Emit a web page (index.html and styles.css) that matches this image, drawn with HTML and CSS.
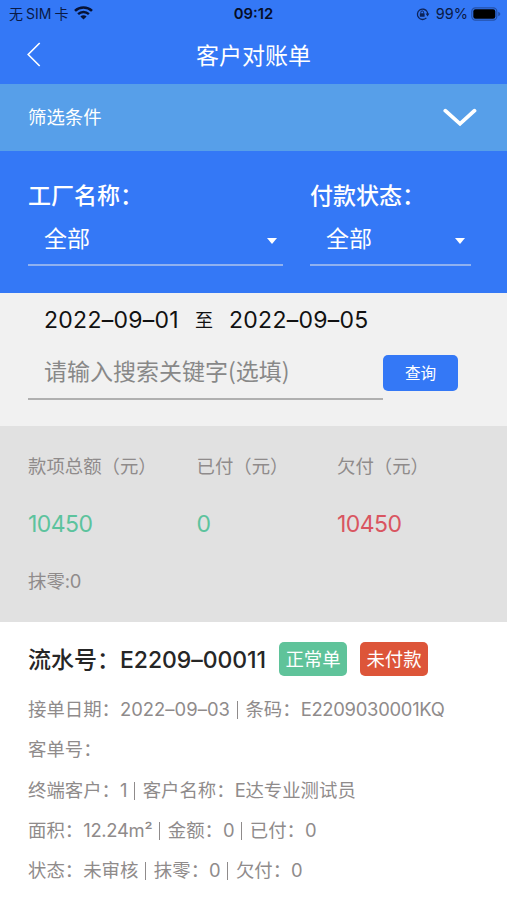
FILE: index.html
```html
<!DOCTYPE html>
<html lang="zh-CN">
<head>
  <meta charset="UTF-8">
  <title>客户对账单</title>
  <link rel="stylesheet" href="styles.css">
</head>
<body>

  <!-- Status bar -->
  <div class="status-bar">
    <div class="status-left">
      <span class="carrier">无<span class="sim">SIM</span>卡</span>
      <svg class="wifi" width="19" height="14" viewBox="0 0 19 14">
        <path d="M1 4.9 A12.4 12.4 0 0 1 18 4.9" fill="none" stroke="#071235" stroke-width="2.6"/>
        <path d="M4.1 8.2 A7.8 7.8 0 0 1 14.9 8.2" fill="none" stroke="#071235" stroke-width="2.4"/>
        <path d="M9.5 13.6 L6.4 10.5 A4.4 4.4 0 0 1 12.6 10.5 Z" fill="#071235"/>
      </svg>
    </div>
    <div class="clock">09:12</div>
    <div class="status-right">
      <svg class="lock" width="14" height="14" viewBox="0 0 14 14">
        <path d="M10.4 10.9 A5.2 5.2 0 1 1 11.2 4.8" fill="none" stroke="#0d2359" stroke-width="1.3"/>
        <path d="M11.2 4.8 Q11.9 6.3 11.5 8" fill="none" stroke="#0d2359" stroke-width="1.3"/>
        <path d="M9.6 6.6 L13.4 6.6 L11.5 9.4 Z" fill="#0d2359"/>
        <rect x="3.8" y="6.2" width="4.8" height="3.6" rx="0.6" fill="#0d2359"/>
        <path d="M4.8 6.5 V5.3 A1.4 1.4 0 0 1 7.6 5.3 V6.5" fill="none" stroke="#0d2359" stroke-width="1"/>
      </svg>
      <span class="battery-text">99%</span>
      <svg class="battery" width="30" height="14" viewBox="0 0 30 14">
        <rect x="0.8" y="0.8" width="25" height="12.4" rx="3.6" fill="none" stroke="#2450a8" stroke-width="1.2"/>
        <rect x="2.3" y="2.3" width="22" height="9.4" rx="2.2" fill="#000"/>
        <path d="M27.2 4.7 Q29.4 5.5 29.4 7 Q29.4 8.5 27.2 9.3 Z" fill="#2450a8"/>
      </svg>
    </div>
  </div>

  <div class="nav">
    <svg class="back" width="14" height="25" viewBox="0 0 14 25">
      <path d="M12.7 1 L1.2 12.5 L12.7 24" fill="none" stroke="#fff" stroke-width="1.6"/>
    </svg>
    <h1>客户对账单</h1>
  </div>

  <div class="filter-bar">
    <span>筛选条件</span>
    <svg width="34" height="20" viewBox="0 0 34 20">
      <path d="M2.3 2.7 L17 15.8 L31.5 2.7" fill="none" stroke="#fff" stroke-width="3.8" stroke-linecap="round" stroke-linejoin="miter"/>
    </svg>
  </div>

  <div class="selects">
    <div class="field factory">
      <label>工厂名称：</label>
      <div class="select">全部<i class="caret"></i></div>
    </div>
    <div class="field pay">
      <label>付款状态：</label>
      <div class="select">全部<i class="caret"></i></div>
    </div>
  </div>

  <div class="search">
    <div class="dates">
      <span class="num date">2022–09–01</span>
      <span class="to">至</span>
      <span class="num date">2022–09–05</span>
    </div>
    <div class="search-row">
      <div class="keyword">请输入搜索关键字(选填)</div>
      <button class="query">查询</button>
    </div>
  </div>

  <div class="summary">
    <div class="totals">
      <div class="total">
        <p>款项总额（元）</p>
        <b class="green">10450</b>
      </div>
      <div class="total">
        <p>已付（元）</p>
        <b class="green">0</b>
      </div>
      <div class="total">
        <p>欠付（元）</p>
        <b class="red">10450</b>
      </div>
    </div>
    <p class="round-off">抹零<span class="num">:0</span></p>
  </div>

  <div class="order">
    <div class="order-head">
      <h2>流水号：<span class="num serial">E2209–00011</span></h2>
      <span class="tag tag-green">正常单</span>
      <span class="tag tag-red">未付款</span>
    </div>
    <p>接单日期：<span class="num day">2022–09–03</span><i class="bar"></i>条码：<span class="num">E2209030001KQ</span></p>
    <p>客单号：</p>
    <p>终端客户：<span class="num">1</span><i class="bar"></i>客户名称：<span class="num">E</span>达专业测试员</p>
    <p>面积：<span class="num">12.24m²</span><i class="bar"></i>金额：<span class="num">0</span><i class="bar"></i>已付：<span class="num">0</span></p>
    <p>状态：未审核<i class="bar"></i>抹零：<span class="num">0</span><i class="bar"></i>欠付：<span class="num">0</span></p>
  </div>

</body>
</html>
```

FILE: styles.css
```css
* {
  box-sizing: border-box;
}
body {
  margin: 0;
  height: 900px;
  overflow: hidden;
  background: #fff;
  font-family: "Noto Sans CJK SC", sans-serif;
  font-size: 18.4px;
  color: #8f8b8b;
}
p, h1, h2 {
  margin: 0;
  font-weight: 400;
}
svg {
  display: block;
}
.num {
  font-family: Inter, "Noto Sans CJK SC", sans-serif;
  letter-spacing: -0.015em;
}

/* Status bar */
.status-bar {
  display: grid;
  grid-template-columns: 1fr auto 1fr;
  align-items: center;
  height: 28px;
  padding: 0 6px 0 9px;
  background: #3478f6;
  color: #0a1a45;
  font-family: Inter, "Noto Sans CJK SC", sans-serif;
  font-size: 14px;
  line-height: 28px;
}
.status-left, .status-right {
  display: flex;
  align-items: center;
}
.status-right {
  justify-content: flex-end;
}
.sim {
  margin: 0 3px;
}
.wifi {
  margin: -2px 0 0 6px;
}
.clock {
  margin-right: 3px;
  color: #050d26;
  font-weight: 600;
  font-size: 14.8px;
}
.battery-text {
  margin: 0 3px 0 6px;
  font-size: 14.5px;
}
.battery {
  margin-top: -1px;
}

/* Title */
.nav {
  display: grid;
  grid-template-columns: 60px 1fr 60px;
  align-items: center;
  height: 56px;
  padding-bottom: 3px;
  background: #3478f6;
  color: #fff;
}
.back {
  margin-left: 27px;
}
.nav h1 {
  font-size: 23px;
  line-height: 48px;
  height: 50px;
  text-align: center;
}

.filter-bar {
  display: flex;
  justify-content: space-between;
  align-items: center;
  height: 67px;
  padding: 0 30px 0 28px;
  background: #579fe9;
  color: #fff;
}
.filter-bar span {
  height: 32px;
  line-height: 28px;
}

/* Selects */
.selects {
  display: flex;
  gap: 27px;
  height: 142px;
  padding: 28px 0 0 28px;
  background: #3478f6;
  color: #fff;
  font-size: 23px;
}
.factory {
  width: 255px;
}
.pay {
  width: 161px;
}
.field label {
  display: block;
  height: 32px;
  line-height: 31px;
  font-weight: 500;
}
.select {
  display: flex;
  justify-content: space-between;
  align-items: center;
  height: 55px;
  padding: 0 6px 2px 16px;
  border-bottom: 2px solid #8fb1f0;
}
.caret {
  margin-top: 9px;
  border: 5px solid transparent;
  border-top: 6px solid #fff;
  border-bottom: 0;
}

/* Dates and keyword */
.search {
  height: 133px;
  padding: 10px 28px 0;
  background: #f1f1f1;
}
.dates {
  display: flex;
  align-items: center;
  height: 33px;
  margin-bottom: 1px;
  padding-left: 16px;
  color: #111;
  font-size: 23px;
}
.date {
  width: 135px;
  letter-spacing: 0.012em;
  white-space: nowrap;
}
.to {
  margin: -2px 16px 0;
  font-size: 18px;
}
.search-row {
  display: flex;
}
.keyword {
  width: 355px;
  height: 63px;
  padding-left: 16px;
  border-bottom: 2px solid #b0b0b0;
  color: #888;
  font-size: 23px;
  line-height: 67px;
}
.query {
  width: 75px;
  height: 36px;
  margin-top: 18px;
  padding: 0 0 2px;
  border: 0;
  border-radius: 5px;
  background: #3478f6;
  color: #fff;
  font-family: inherit;
  font-size: 15.6px;
}

/* Summary */
.summary {
  height: 196px;
  padding: 25px 28px 0;
  background: #e1e1e1;
}
.totals {
  display: grid;
  grid-template-columns: 168.5px 140.5px 1fr;
}
.total p {
  height: 30px;
  line-height: 28px;
}
.total b {
  display: block;
  margin-top: 24px;
  height: 38px;
  line-height: 38px;
  font-family: Inter, sans-serif;
  font-size: 23px;
  font-weight: 400;
  letter-spacing: -0.025em;
}
.green {
  color: #5cc39d;
}
.red {
  color: #d95560;
}
.round-off {
  margin-top: 23px;
  line-height: 28px;
}

/* Order */
.order {
  padding: 16px 28px;
}
.order-head {
  display: flex;
  align-items: center;
  height: 42px;
  margin-bottom: 8px;
}
.order-head h2 {
  width: 251px;
  height: 42px;
  color: #262626;
  font-size: 23px;
  font-weight: 500;
  line-height: 40px;
  white-space: nowrap;
}
.serial {
  letter-spacing: -0.003em;
}
.tag {
  width: 68px;
  height: 34px;
  margin-right: 13px;
  border-radius: 5px;
  color: #fff;
  line-height: 32px;
  text-align: center;
}
.tag-green {
  background: #5fc39a;
}
.tag-red {
  background: #dd5539;
}
.order p {
  height: 40.3px;
  line-height: 40px;
  white-space: nowrap;
}
.day {
  letter-spacing: 0.002em;
}
.bar {
  display: inline-block;
  width: 1px;
  height: 18px;
  margin: 0 7.5px 0 7px;
  background: #8f8b8b;
  vertical-align: -3px;
}
```
